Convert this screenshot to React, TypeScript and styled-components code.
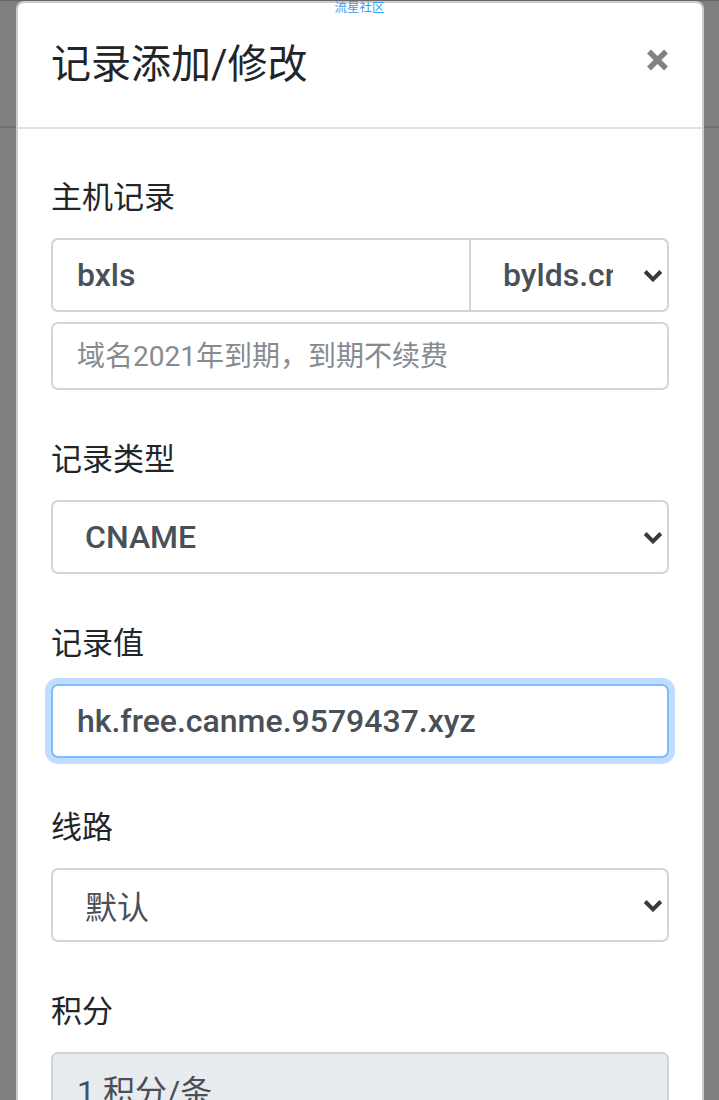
import React from 'react'
import styled, { createGlobalStyle } from 'styled-components'

const GlobalStyle = createGlobalStyle`
  html, body {
    margin: 0;
    padding: 0;
  }
  body {
    background: #7f7f7f;
    font-family: Roboto, "Noto Sans CJK SC", sans-serif;
    overflow: hidden;
  }
`

const Page = styled.div`
  position: relative;
  height: 1100px;
  overflow: hidden;
  background: #7f7f7f;
  border-top: 1px solid #676767;
  box-sizing: border-box;
`

/* navbar of the page behind the backdrop */
const BackBar = styled.div`
  height: 125px;
  border-bottom: 2px solid #707274;
`

const Watermark = styled.div`
  position: absolute;
  top: -4px;
  left: 50%;
  transform: translateX(-50%);
  z-index: 3;
  font-size: 12.5px;
  color: #3d9cf5;
  white-space: nowrap;
`

const Modal = styled.div`
  position: absolute;
  top: 0;
  left: 16px;
  width: 688px;
  height: 1180px;
  box-sizing: border-box;
  background: #fff;
  border: 2px solid rgba(0, 0, 0, 0.2);
  border-radius: 8px;
  z-index: 2;
`

const Header = styled.div`
  display: flex;
  align-items: center;
  justify-content: space-between;
  height: 124px;
  padding: 0 33px;
  border-bottom: 2px solid #dee2e6;
`

const Title = styled.h5`
  margin: 0;
  font-size: 40px;
  font-weight: 400;
  line-height: 1.2;
  color: #212529;
`

const Close = styled.button`
  display: flex;
  border: 0;
  padding: 0;
  margin: 0 0 10px 0;
  background: none;
  cursor: pointer;
`

const Body = styled.div`
  padding: 51px 33px 0;
`

const Group = styled.div`
  & + & {
    margin-top: 52px;
  }
`

const Label = styled.label`
  display: block;
  font-size: 31px;
  line-height: 36px;
  color: #212529;
  margin-bottom: 22px;
`

const InputGroup = styled.div`
  display: flex;
`

// latin values render a touch heavier than the CJK ones in the original
const Field = styled.input<{ $focus?: boolean; $small?: boolean; $joined?: boolean; $latin?: boolean }>`
  display: block;
  box-sizing: border-box;
  flex: 1 1 0;
  width: 100%;
  min-width: 0;
  height: ${(p) => (p.$small ? '68px' : '74px')};
  margin-top: ${(p) => (p.$small ? '10px' : '0')};
  padding: 0 24px;
  font-family: inherit;
  font-size: ${(p) => (p.$small ? '28px' : '32px')};
  font-weight: ${(p) => (p.$latin ? 500 : 400)};
  color: #495057;
  background: #fff;
  border: 2px solid ${(p) => (p.$focus ? '#80bdff' : '#ced4da')};
  border-radius: ${(p) => (p.$joined ? '7px 0 0 7px' : '7px')};
  box-shadow: ${(p) => (p.$focus ? '0 0 0 6px rgba(0, 123, 255, 0.25)' : 'none')};
  outline: none;

  &::placeholder {
    color: #868b91;
  }

  &:disabled {
    background: #e9ecef;
    opacity: 1;
  }
`

const SelectBox = styled.div<{ $joined?: boolean; $latin?: boolean }>`
  display: flex;
  align-items: center;
  box-sizing: border-box;
  flex: ${(p) => (p.$joined ? '0 0 200px' : '1 1 auto')};
  width: ${(p) => (p.$joined ? '200px' : 'auto')};
  min-width: 0;
  height: 74px;
  margin-left: ${(p) => (p.$joined ? '-2px' : '0')};
  padding: 0 4px 0 32px;
  font-size: 32px;
  font-weight: ${(p) => (p.$latin ? 500 : 400)};
  color: #495057;
  background: #fff;
  border: 2px solid #ced4da;
  border-radius: ${(p) => (p.$joined ? '0 7px 7px 0' : '7px')};
`

const SelectValue = styled.span`
  flex: 1 1 0;
  min-width: 0;
  overflow: hidden;
  white-space: nowrap;
`

const Chevron = styled.svg`
  flex: 0 0 auto;
  margin-left: 30px;
`

const ChevronIcon = () => (
  <Chevron width="20" height="13" viewBox="0 0 20 13">
    <path d="M2.2 2.5L10 10.3L17.8 2.5" fill="none" stroke="#343a40" strokeWidth="4" />
  </Chevron>
)

const Select: React.FC<{ value: string; joined?: boolean; latin?: boolean }> = ({ value, joined, latin }) => (
  <SelectBox $joined={joined} $latin={latin}>
    <SelectValue>{value}</SelectValue>
    <ChevronIcon />
  </SelectBox>
)

export default function App() {
  return (
    <Page>
      <GlobalStyle />
      <BackBar />
      <Watermark>流星社区</Watermark>
      <Modal>
        <Header>
          <Title>记录添加/修改</Title>
          <Close aria-label="关闭">
            <svg width="23" height="22" viewBox="0 0 23 22">
              <path d="M3 2.5L20 19.5M20 2.5L3 19.5" stroke="#828282" strokeWidth="5.5" />
            </svg>
          </Close>
        </Header>
        <Body>
          <Group>
            <Label>主机记录</Label>
            <InputGroup>
              <Field defaultValue="bxls" $joined $latin />
              <Select value="bylds.cn" joined latin />
            </InputGroup>
            <Field $small placeholder="域名2021年到期，到期不续费" />
          </Group>
          <Group>
            <Label>记录类型</Label>
            <InputGroup>
              <Select value="CNAME" latin />
            </InputGroup>
          </Group>
          <Group>
            <Label>记录值</Label>
            <Field defaultValue="hk.free.canme.9579437.xyz" $focus $latin />
          </Group>
          <Group>
            <Label>线路</Label>
            <InputGroup>
              <Select value="默认" />
            </InputGroup>
          </Group>
          <Group>
            <Label>积分</Label>
            <Field defaultValue="1 积分/条" disabled />
          </Group>
        </Body>
      </Modal>
    </Page>
  )
}
